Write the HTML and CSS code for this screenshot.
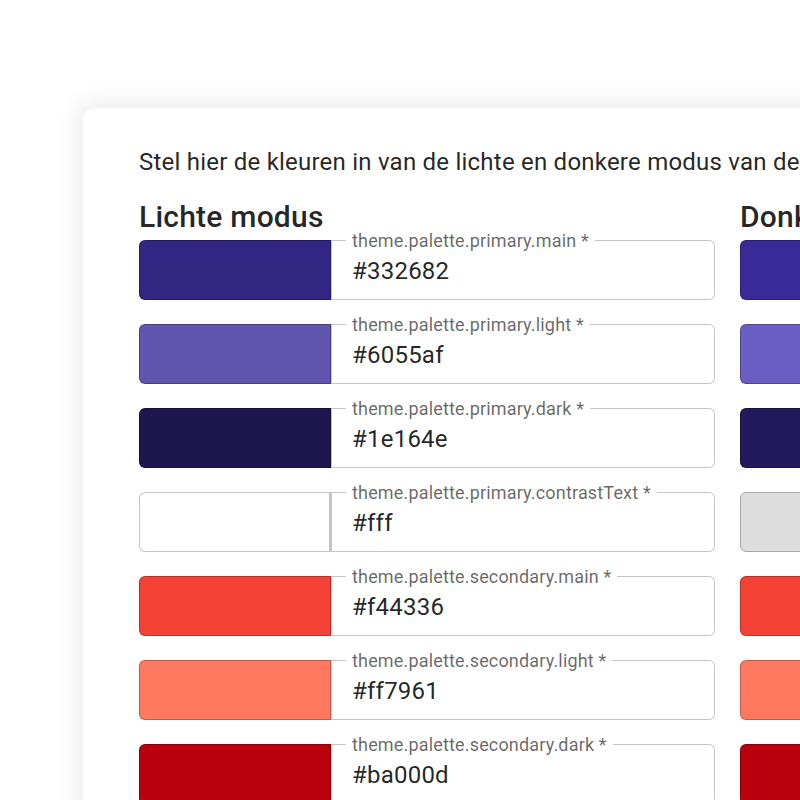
FILE: index.html
```html
<!DOCTYPE html>
<html lang="nl">
<head>
    <meta charset="UTF-8">
    <meta name="viewport" content="width=device-width, initial-scale=1.0">
    <title>Thema kleuren</title>
    <link rel="stylesheet" href="styles.css">
</head>
<body>
    <div class="page">
        <div class="card">
            <p class="intro">Stel hier de kleuren in van de lichte en donkere modus van de applicatie.</p>
            <div class="modes">
                <div class="mode">
                    <h2>Lichte modus</h2>
                    <div class="row">
                        <div class="swatch" style="background-color: #332682"></div>
                        <div class="field"><label>theme.palette.primary.main *</label><span>#332682</span></div>
                    </div>
                    <div class="row">
                        <div class="swatch" style="background-color: #6055af"></div>
                        <div class="field"><label>theme.palette.primary.light *</label><span>#6055af</span></div>
                    </div>
                    <div class="row">
                        <div class="swatch" style="background-color: #1e164e"></div>
                        <div class="field"><label>theme.palette.primary.dark *</label><span>#1e164e</span></div>
                    </div>
                    <div class="row">
                        <div class="swatch light-swatch" style="background-color: #fff"></div>
                        <div class="field"><label>theme.palette.primary.contrastText *</label><span>#fff</span></div>
                    </div>
                    <div class="row">
                        <div class="swatch" style="background-color: #f44336"></div>
                        <div class="field"><label>theme.palette.secondary.main *</label><span>#f44336</span></div>
                    </div>
                    <div class="row">
                        <div class="swatch" style="background-color: #ff7961"></div>
                        <div class="field"><label>theme.palette.secondary.light *</label><span>#ff7961</span></div>
                    </div>
                    <div class="row">
                        <div class="swatch" style="background-color: #ba000d"></div>
                        <div class="field"><label>theme.palette.secondary.dark *</label><span>#ba000d</span></div>
                    </div>
                </div>
                <div class="mode">
                    <h2>Donkere modus</h2>
                    <div class="row">
                        <div class="swatch" style="background-color: #392a98"></div>
                        <div class="field"><label>theme.palette.primary.main *</label><span>#392a98</span></div>
                    </div>
                    <div class="row">
                        <div class="swatch" style="background-color: #6a5ec5"></div>
                        <div class="field"><label>theme.palette.primary.light *</label><span>#6a5ec5</span></div>
                    </div>
                    <div class="row">
                        <div class="swatch" style="background-color: #221a5a"></div>
                        <div class="field"><label>theme.palette.primary.dark *</label><span>#221a5a</span></div>
                    </div>
                    <div class="row">
                        <div class="swatch dim-swatch" style="background-color: #dddddd"></div>
                        <div class="field"><label>theme.palette.primary.contrastText *</label><span>#ddd</span></div>
                    </div>
                    <div class="row">
                        <div class="swatch" style="background-color: #f44336"></div>
                        <div class="field"><label>theme.palette.secondary.main *</label><span>#f44336</span></div>
                    </div>
                    <div class="row">
                        <div class="swatch" style="background-color: #ff7961"></div>
                        <div class="field"><label>theme.palette.secondary.light *</label><span>#ff7961</span></div>
                    </div>
                    <div class="row">
                        <div class="swatch" style="background-color: #ba000d"></div>
                        <div class="field"><label>theme.palette.secondary.dark *</label><span>#ba000d</span></div>
                    </div>
                </div>
            </div>
        </div>
    </div>
</body>
</html>
```

FILE: styles.css
```css
body, html {
    margin: 0;
    height: 100%;
    overflow: hidden;
    background-color: #fff;
}
.page {
    padding: 108px 0 0 83px;
    font-family: Roboto, "Liberation Sans", sans-serif;
    color: rgba(0, 0, 0, 0.87);
}
.card {
    width: 1300px;
    background-color: #fff;
    border-radius: 12px;
    box-shadow: 0 0 22px 7px rgba(0, 0, 0, 0.07);
    padding: 36px 56px 40px 56px;
}
.intro {
    margin: 0;
    font-size: 24px;
    line-height: 36px;
    letter-spacing: 0.00938em;
    white-space: nowrap;
}
.modes {
    display: grid;
    grid-template-columns: 576px 576px;
    column-gap: 25px;
    margin-top: 13px;
}
.mode h2 {
    margin: 0 0 -1px 0;
    font-size: 30px;
    font-weight: 500;
    line-height: 48px;
    letter-spacing: 0.0075em;
}
.row {
    display: grid;
    grid-template-columns: 1fr 2fr;
    height: 60px;
    margin-bottom: 24px;
}
.swatch {
    border: 1px solid rgba(0, 0, 0, 0.25);
    border-radius: 6px 0 0 6px;
}
.light-swatch {
    border-color: rgba(0, 0, 0, 0.23);
    border-right-width: 2px;
}
.dim-swatch {
    border-color: #a8a8a8;
}
.field {
    position: relative;
    display: flex;
    align-items: center;
    border: 1px solid rgba(0, 0, 0, 0.23);
    border-radius: 0 6px 6px 0;
    padding: 2px 20px 0 20px;
    font-size: 24px;
    letter-spacing: 0.00938em;
}
.field label {
    position: absolute;
    left: 14px;
    top: -11px;
    padding: 0 6px;
    background-color: #fff;
    font-size: 18px;
    line-height: 21px;
    letter-spacing: 0.00938em;
    color: rgba(0, 0, 0, 0.6);
}
```
